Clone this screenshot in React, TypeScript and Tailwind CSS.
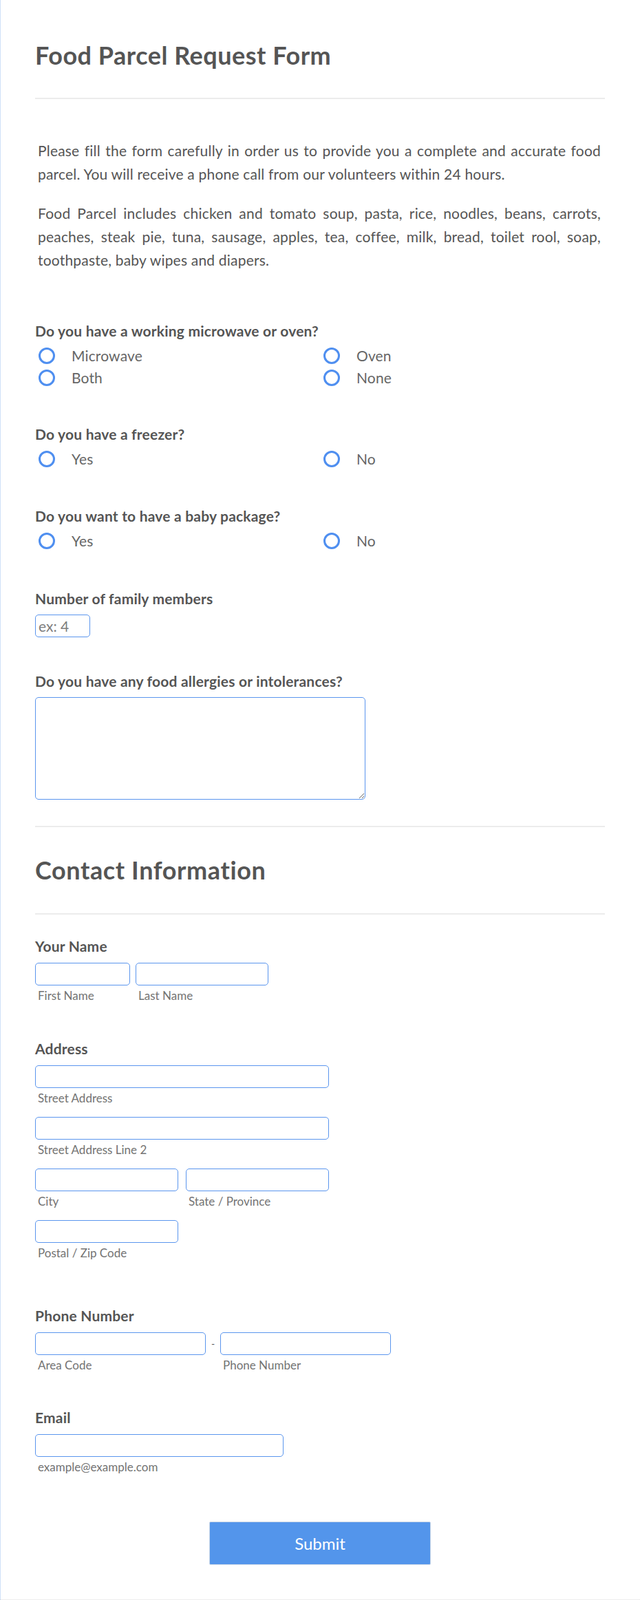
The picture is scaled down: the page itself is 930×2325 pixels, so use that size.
import React from "react";

const Label = ({ children }: { children: React.ReactNode }) => (
  <div className="text-[21px] leading-[28px] tracking-[0.2px] font-bold text-[#555]">{children}</div>
);

const Sub = ({ children }: { children: React.ReactNode }) => (
  <div className="mt-[5px] pl-1 text-[17px] leading-[20px] text-[#737373]">{children}</div>
);

const Field = ({ w, sub }: { w: string; sub: string }) => (
  <div className={w}>
    <input className="block w-full h-[33px] rounded-[5px] border border-[#5a95ee] bg-white px-1 outline-none" />
    <Sub>{sub}</Sub>
  </div>
);

const Radio = ({ label }: { label: string }) => (
  <label className="flex items-center h-8 pl-[5px] cursor-pointer">
    <span className="w-6 h-6 rounded-full border-[3px] border-[#4f8ff0] bg-white" />
    <span className="ml-6 text-[21px] tracking-[0.15px] text-[#666]">{label}</span>
  </label>
);

const RadioGroup = ({ options }: { options: string[] }) => (
  <div className="mt-[6px] grid grid-cols-2 w-[828px]">
    {options.map((o) => (
      <Radio key={o} label={o} />
    ))}
  </div>
);

const Divider = ({ className }: { className: string }) => (
  <div className={`h-[2px] w-[828px] bg-[#ececec] ${className}`} />
);

export default function App() {
  return (
    <div className="h-[2325px] flex flex-col bg-white border-l border-[#cfe0f8] font-['Lato','Open_Sans',sans-serif] text-[#555]">
      <div className="pl-[50px] flex-1">
        <h1 className="pt-[60px] text-[36px] leading-[40px] tracking-[0.5px] font-bold text-[#555]">
          Food Parcel Request Form
        </h1>
        <Divider className="mt-[42px]" />

        <div className="mt-[58px] ml-[4px] w-[818px] text-[21px] leading-[34px] tracking-[0.2px] text-[#555] text-justify">
          <p>
            Please fill the form carefully in order us to provide you a complete and accurate food parcel. You will
            receive a phone call from our volunteers within 24 hours.
          </p>
          <p className="mt-[23px]">
            Food Parcel includes chicken and tomato soup, pasta, rice, noodles, beans, carrots, peaches, steak pie, tuna,
            sausage, apples, tea, coffee, milk, bread, toilet rool, soap, toothpaste, baby wipes and diapers.
          </p>
        </div>

        <div className="mt-[72px]">
          <Label>Do you have a working microwave or oven?</Label>
          <RadioGroup options={["Microwave", "Oven", "Both", "None"]} />
        </div>

        <div className="mt-[52px]">
          <Label>Do you have a freezer?</Label>
          <RadioGroup options={["Yes", "No"]} />
        </div>

        <div className="mt-[53px]">
          <Label>Do you want to have a baby package?</Label>
          <RadioGroup options={["Yes", "No"]} />
        </div>

        <div className="mt-[54px]">
          <Label>Number of family members</Label>
          <input
            placeholder="ex: 4"
            className="mt-[9px] block w-[80px] h-[33px] rounded-[5px] border border-[#5a95ee] px-1 text-[21px] outline-none placeholder:text-[#7d7d7d]"
          />
        </div>

        <div className="mt-[50px]">
          <Label>Do you have any food allergies or intolerances?</Label>
          <textarea className="mt-[9px] block w-[480px] h-[149px] rounded-[5px] border border-[#5a95ee] outline-none" />
        </div>

        <Divider className="mt-[38px]" />
        <h2 className="mt-[42px] text-[36px] leading-[40px] tracking-[0.6px] font-bold text-[#555]">
          Contact Information
        </h2>
        <Divider className="mt-[43px]" />

        <div className="mt-[32px]">
          <Label>Your Name</Label>
          <div className="mt-[10px] flex gap-[8px]">
            <Field w="w-[138px]" sub="First Name" />
            <Field w="w-[193px]" sub="Last Name" />
          </div>
        </div>

        <div className="mt-[53px]">
          <Label>Address</Label>
          <div className="mt-[10px] w-[427px] flex flex-col gap-[17px]">
            <Field w="w-full" sub="Street Address" />
            <Field w="w-full" sub="Street Address Line 2" />
            <div className="flex gap-[11px]">
              <Field w="w-[208px]" sub="City" />
              <Field w="w-[208px]" sub="State / Province" />
            </div>
            <Field w="w-[208px]" sub="Postal / Zip Code" />
          </div>
        </div>

        <div className="mt-[67px]">
          <Label>Phone Number</Label>
          <div className="mt-[10px] flex items-start">
            <Field w="w-[248px]" sub="Area Code" />
            <span className="w-[21px] h-[33px] flex items-center justify-center text-[14px] text-[#555]">-</span>
            <Field w="w-[248px]" sub="Phone Number" />
          </div>
        </div>

        <div className="mt-[52px]">
          <Label>Email</Label>
          <div className="mt-[10px]">
            <Field w="w-[361px]" sub="example@example.com" />
          </div>
        </div>

        <div className="mt-[69px] w-[828px] flex justify-center">
          <button className="w-[322px] h-[63px] rounded-[2px] border border-[#c9d6e6] bg-[#5395eb] text-white text-[24px]">
            Submit
          </button>
        </div>
      </div>
      <div className="border-t border-dotted border-[#dcdcdc]" />
    </div>
  );
}
